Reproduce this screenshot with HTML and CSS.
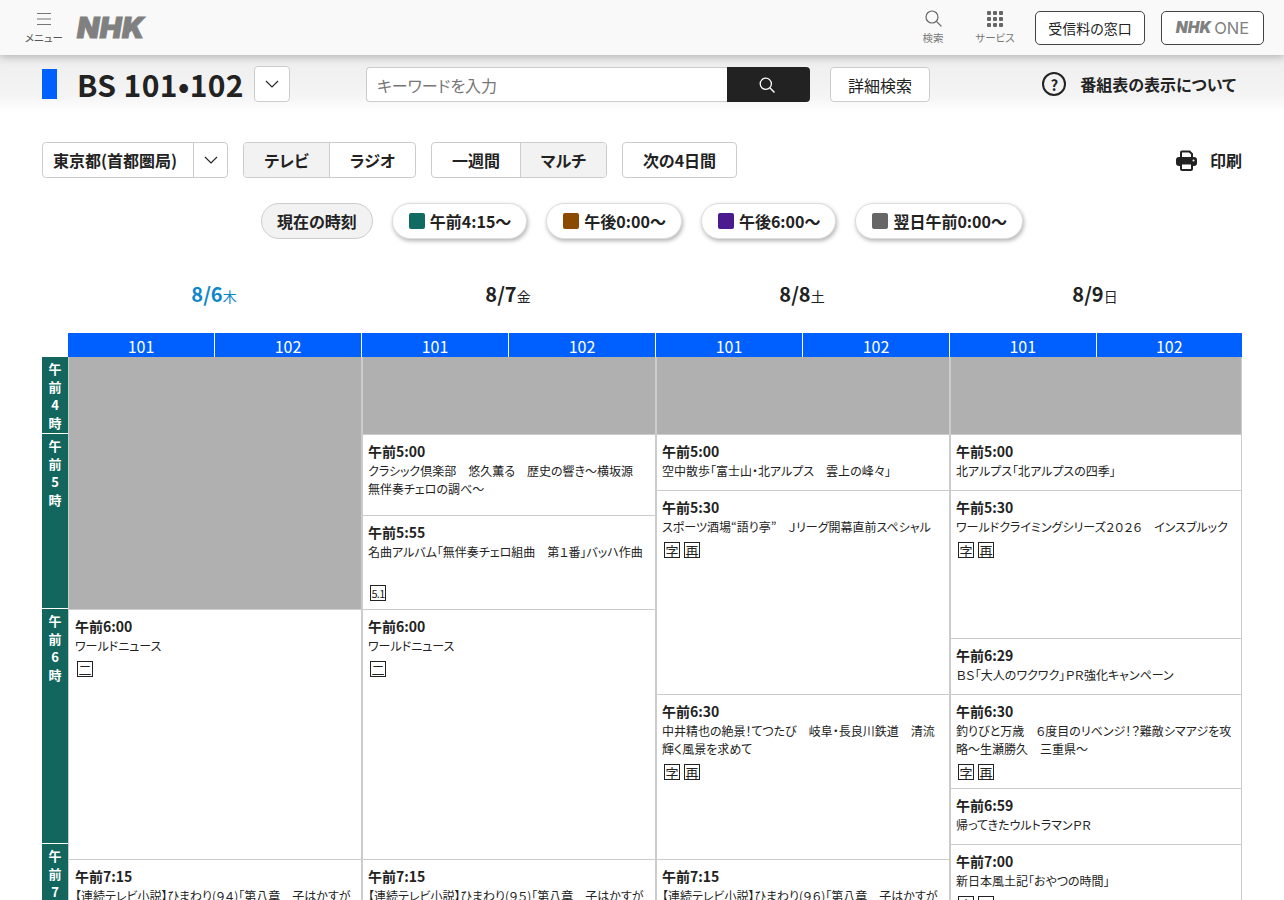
FILE: index.html
```html
<!DOCTYPE html>
<html lang="ja">
<head>
  <meta charset="utf-8">
  <title>番組表 BS 101・102</title>
  <link rel="stylesheet" href="styles.css">
</head>
<body>
  <header class="site-header">
    <div class="menu-btn">
      <svg width="14" height="14" viewBox="0 0 14 14"><path d="M0 1.5h14M0 7h14M0 12.5h14" stroke="#777" stroke-width="1.2" fill="none"/></svg>
      <span>メニュー</span>
    </div>
    <div class="nhk-logo">NHK</div>
    <div class="header-right">
      <div class="head-icon">
        <svg width="17" height="17" viewBox="0 0 17 17"><circle cx="7" cy="7" r="6" stroke="#666" stroke-width="1.2" fill="none"/><path d="M11.4 11.4l5 5" stroke="#666" stroke-width="1.3"/></svg>
        <span>検索</span>
      </div>
      <div class="head-icon services">
        <svg width="16" height="16" viewBox="0 0 16 16" fill="#666">
          <rect x="0" y="0" width="4" height="4" rx="1"/><rect x="6" y="0" width="4" height="4" rx="1"/><rect x="12" y="0" width="4" height="4" rx="1"/>
          <rect x="0" y="6" width="4" height="4" rx="1"/><rect x="6" y="6" width="4" height="4" rx="1"/><rect x="12" y="6" width="4" height="4" rx="1"/>
          <rect x="0" y="12" width="4" height="4" rx="1"/><rect x="6" y="12" width="4" height="4" rx="1"/><rect x="12" y="12" width="4" height="4" rx="1"/>
        </svg>
        <span>サービス</span>
      </div>
      <a class="head-btn fee">受信料の窓口</a>
      <a class="head-btn one"><b>NHK</b>ONE</a>
    </div>
  </header>

  <div class="sub-bar">
    <div class="channel-mark"></div>
    <h1 class="channel-name">BS 101•102</h1>
    <div class="chevron-btn">
      <svg width="14" height="8" viewBox="0 0 14 8"><path d="M1 1l6 6 6-6" stroke="#222" stroke-width="1.1" fill="none"/></svg>
    </div>
    <div class="search-box">
      <div class="search-input">キーワードを入力</div>
      <div class="search-submit">
        <svg width="16" height="16" viewBox="0 0 16 16"><circle cx="6.8" cy="6.8" r="5.6" stroke="#fff" stroke-width="1.3" fill="none"/><path d="M11 11l4.5 4.5" stroke="#fff" stroke-width="1.4"/></svg>
      </div>
    </div>
    <div class="detail-btn">詳細検索</div>
    <div class="about-link">
      <span class="about-icon">?</span>
      <span>番組表の表示について</span>
    </div>
  </div>

  <main class="content">
    <div class="controls">
      <div class="btn-group area">
        <div class="seg area-name">東京都(首都圏局)</div>
        <div class="seg area-arrow">
          <svg width="14" height="8" viewBox="0 0 14 8"><path d="M1 1l6 6 6-6" stroke="#222" stroke-width="1.1" fill="none"/></svg>
        </div>
      </div>
      <div class="btn-group media">
        <div class="seg tv active">テレビ</div>
        <div class="seg radio">ラジオ</div>
      </div>
      <div class="btn-group span">
        <div class="seg week">一週間</div>
        <div class="seg multi active">マルチ</div>
      </div>
      <div class="btn-group next">
        <div class="seg">次の4日間</div>
      </div>
      <div class="print-link">
        <svg width="21" height="21" viewBox="0 0 21 21">
          <path d="M5 8V2.5a1 1 0 0 1 1-1h7.5L16 4v4" stroke="#222" stroke-width="2" fill="none"/>
          <rect x="0" y="7" width="21" height="9" rx="3" fill="#222"/>
          <rect x="5" y="13.5" width="11" height="6.5" rx="1" fill="#fff" stroke="#222" stroke-width="2"/>
          <circle cx="17.5" cy="10.5" r="1" fill="#fff"/>
        </svg>
        <span>印刷</span>
      </div>
    </div>

    <div class="jump-row">
      <div class="pill now">現在の時刻</div>
      <div class="pill"><i class="swatch morning"></i>午前4:15〜</div>
      <div class="pill"><i class="swatch noon"></i>午後0:00〜</div>
      <div class="pill"><i class="swatch evening"></i>午後6:00〜</div>
      <div class="pill"><i class="swatch night"></i>翌日午前0:00〜</div>
    </div>

    <div class="date-row">
      <div class="date today"><b>8/6</b>木</div>
      <div class="date"><b>8/7</b>金</div>
      <div class="date"><b>8/8</b>土</div>
      <div class="date"><b>8/9</b>日</div>
    </div>

    <div class="schedule">
      <div class="hours">
        <div class="hour" style="height:77px">午<br>前<br>4<br>時</div>
        <div class="hour" style="height:175px">午<br>前<br>5<br>時</div>
        <div class="hour" style="height:235px">午<br>前<br>6<br>時</div>
        <div class="hour" style="height:100px">午<br>前<br>7<br>時</div>
      </div>

      <div class="day">
        <div class="ch-head"><span>101</span><span>102</span></div>
        <div class="blank" style="height:252px"></div>
        <div class="prog" style="height:250px">
          <div class="time">午前6:00</div>
          <div class="desc">ワールドニュース</div>
          <div class="marks"><span class="mark">二</span></div>
        </div>
        <div class="prog" style="height:100px">
          <div class="time">午前7:15</div>
          <div class="desc">【連続テレビ小説】ひまわり(９４)「第八章　子はかすが</div>
        </div>
      </div>

      <div class="day">
        <div class="ch-head"><span>101</span><span>102</span></div>
        <div class="blank" style="height:77px"></div>
        <div class="prog" style="height:81px">
          <div class="time">午前5:00</div>
          <div class="desc">クラシック倶楽部　悠久薫る　歴史の響き〜横坂源　無伴奏チェロの調べ〜</div>
        </div>
        <div class="prog" style="height:94px">
          <div class="time">午前5:55</div>
          <div class="desc two-lines">名曲アルバム「無伴奏チェロ組曲　第１番」バッハ作曲</div>
          <div class="marks"><span class="mark small">5.1</span></div>
        </div>
        <div class="prog" style="height:250px">
          <div class="time">午前6:00</div>
          <div class="desc">ワールドニュース</div>
          <div class="marks"><span class="mark">二</span></div>
        </div>
        <div class="prog" style="height:100px">
          <div class="time">午前7:15</div>
          <div class="desc">【連続テレビ小説】ひまわり(９５)「第八章　子はかすが</div>
        </div>
      </div>

      <div class="day">
        <div class="ch-head"><span>101</span><span>102</span></div>
        <div class="blank" style="height:77px"></div>
        <div class="prog" style="height:56px">
          <div class="time">午前5:00</div>
          <div class="desc">空中散歩「富士山・北アルプス　雲上の峰々」</div>
        </div>
        <div class="prog" style="height:204px">
          <div class="time">午前5:30</div>
          <div class="desc">スポーツ酒場“語り亭”　Ｊリーグ開幕直前スペシャル</div>
          <div class="marks"><span class="mark">字</span><span class="mark">再</span></div>
        </div>
        <div class="prog" style="height:165px">
          <div class="time">午前6:30</div>
          <div class="desc">中井精也の絶景！てつたび　岐阜・長良川鉄道　清流輝く風景を求めて</div>
          <div class="marks"><span class="mark">字</span><span class="mark">再</span></div>
        </div>
        <div class="prog" style="height:100px">
          <div class="time">午前7:15</div>
          <div class="desc">【連続テレビ小説】ひまわり(９６)「第八章　子はかすが</div>
        </div>
      </div>

      <div class="day">
        <div class="ch-head"><span>101</span><span>102</span></div>
        <div class="blank" style="height:77px"></div>
        <div class="prog" style="height:56px">
          <div class="time">午前5:00</div>
          <div class="desc">北アルプス「北アルプスの四季」</div>
        </div>
        <div class="prog" style="height:148px">
          <div class="time">午前5:30</div>
          <div class="desc">ワールドクライミングシリーズ２０２６　インスブルック</div>
          <div class="marks"><span class="mark">字</span><span class="mark">再</span></div>
        </div>
        <div class="prog" style="height:56px">
          <div class="time">午前6:29</div>
          <div class="desc">ＢＳ「大人のワクワク」ＰＲ強化キャンペーン</div>
        </div>
        <div class="prog" style="height:94px">
          <div class="time">午前6:30</div>
          <div class="desc">釣りびと万歳　６度目のリベンジ！？難敵シマアジを攻略〜生瀬勝久　三重県〜</div>
          <div class="marks"><span class="mark">字</span><span class="mark">再</span></div>
        </div>
        <div class="prog" style="height:56px">
          <div class="time">午前6:59</div>
          <div class="desc">帰ってきたウルトラマンＰＲ</div>
        </div>
        <div class="prog" style="height:100px">
          <div class="time">午前7:00</div>
          <div class="desc">新日本風土記「おやつの時間」</div>
          <div class="marks"><span class="mark">字</span><span class="mark">再</span></div>
        </div>
      </div>
    </div>
  </main>
</body>
</html>
```

FILE: styles.css
```css
html {
  overflow: hidden;
}

body {
  margin: 0;
  height: 900px;
  overflow: hidden;
  background-color: #ffffff;
  color: #222222;
  font-family: "Noto Sans CJK JP", "Noto Sans", sans-serif;
  font-feature-settings: "palt";
}

.site-header {
  position: relative;
  z-index: 2;
  display: flex;
  align-items: center;
  height: 55px;
  padding: 0 20px 0 24px;
  box-sizing: border-box;
  background-color: #f9f9f9;
  box-shadow: 0 2px 8px rgba(0, 0, 0, 0.25);
}

.menu-btn {
  display: flex;
  flex-direction: column;
  align-items: center;
  width: 40px;
  padding-top: 2px;
  font-size: 10.5px;
  line-height: 14px;
  color: #555555;
}

.menu-btn span {
  margin-top: 5px;
}

.nhk-logo {
  margin-left: 13px;
  font-family: Inter, sans-serif;
  font-size: 29px;
  font-weight: 900;
  font-style: italic;
  letter-spacing: 0.5px;
  color: #808080;
  -webkit-text-stroke: 1px #808080;
}

.header-right {
  display: flex;
  align-items: center;
  margin-left: auto;
}

.head-icon {
  display: flex;
  flex-direction: column;
  align-items: center;
  width: 40px;
  margin-right: 22px;
  font-size: 10.5px;
  line-height: 14px;
  color: #777777;
}

.head-icon span {
  margin-top: 4px;
}

.head-icon.services {
  margin-right: 20px;
}

.head-btn {
  display: flex;
  align-items: center;
  justify-content: center;
  height: 34px;
  box-sizing: border-box;
  border: 1px solid #444444;
  border-radius: 5px;
  background-color: #ffffff;
  font-size: 14px;
}

.head-btn.fee {
  width: 110px;
  margin-right: 16px;
}

.head-btn.one {
  width: 103px;
  color: #808080;
  font-family: Inter, sans-serif;
  font-size: 16.5px;
}

.head-btn.one b {
  margin-right: 3px;
  font-size: 15.5px;
  font-weight: 900;
  font-style: italic;
}

.sub-bar {
  display: flex;
  align-items: center;
  height: 57px;
  padding: 1px 48px 0 42px;
  box-sizing: border-box;
  background: linear-gradient(#eeeeee, #f4f4f4 70%, #ffffff);
}

.channel-mark {
  width: 15px;
  height: 30px;
  background-color: #0060ff;
}

.channel-name {
  margin: 0 0 0 20px;
  font-size: 30px;
  font-weight: 700;
  line-height: 36px;
  letter-spacing: 0.4px;
  white-space: nowrap;
}

.chevron-btn {
  display: flex;
  align-items: center;
  justify-content: center;
  width: 36px;
  height: 36px;
  margin-left: 10px;
  box-sizing: border-box;
  border: 1px solid #cccccc;
  border-radius: 4px;
  background-color: #ffffff;
}

.search-box {
  display: flex;
  height: 35px;
  margin: 1px 0 0 76px;
}

.search-input {
  display: flex;
  align-items: center;
  width: 361px;
  padding-left: 10px;
  box-sizing: border-box;
  border: 1px solid #cccccc;
  border-right: none;
  border-radius: 4px 0 0 4px;
  background-color: #ffffff;
  font-size: 16px;
  color: #767676;
}

.search-submit {
  display: flex;
  align-items: center;
  justify-content: center;
  width: 83px;
  padding-right: 2px;
  box-sizing: border-box;
  border-radius: 0 4px 4px 0;
  background-color: #222222;
}

.detail-btn {
  display: flex;
  align-items: center;
  justify-content: center;
  width: 100px;
  height: 35px;
  margin: 1px 0 0 20px;
  box-sizing: border-box;
  border: 1px solid #cccccc;
  border-radius: 4px;
  background-color: #ffffff;
  font-size: 16px;
}

.about-link {
  display: flex;
  align-items: center;
  margin-left: auto;
  font-size: 16px;
  font-weight: 700;
}

.about-icon {
  display: flex;
  align-items: center;
  justify-content: center;
  width: 24px;
  height: 24px;
  margin-right: 14px;
  box-sizing: border-box;
  border: 2px solid #222222;
  border-radius: 50%;
  font-size: 15px;
  line-height: 1;
}

.content {
  padding: 30px 42px 0;
}

.controls {
  display: flex;
  align-items: center;
  height: 36px;
}

.btn-group {
  display: flex;
  height: 36px;
  box-sizing: border-box;
  margin-right: 15px;
  border: 1px solid #cccccc;
  border-radius: 4px;
  overflow: hidden;
  font-size: 16px;
  font-weight: 700;
}

.seg {
  display: flex;
  align-items: center;
  justify-content: center;
  box-sizing: border-box;
}

.seg.active {
  background-color: #f2f2f2;
}

.seg + .seg {
  border-left: 1px solid #cccccc;
}

.area { width: 186px; }
.area-name { width: 150px; justify-content: flex-start; padding-left: 10px; }
.area-arrow { width: 34px; }
.media { width: 173px; }
.tv { width: 85px; }
.radio { width: 86px; }
.span { width: 176px; }
.week { width: 88px; }
.multi { width: 86px; }
.next { width: 115px; }
.next .seg { width: 100%; }

.print-link {
  display: flex;
  align-items: center;
  margin-left: auto;
  font-size: 16px;
  font-weight: 700;
}

.print-link span {
  margin-left: 13px;
}

.jump-row {
  display: flex;
  justify-content: center;
  gap: 19px;
  margin-top: 25px;
}

.pill {
  display: flex;
  align-items: center;
  height: 36px;
  padding: 0 15px 0 16px;
  box-sizing: border-box;
  border: 1px solid #dddddd;
  border-radius: 18px;
  background-color: #ffffff;
  box-shadow: 1px 2px 4px rgba(0, 0, 0, 0.3);
  font-size: 16px;
  font-weight: 700;
  white-space: nowrap;
}

.pill.now {
  padding: 0 15px;
  background-color: #f2f2f2;
  border-color: #cccccc;
  box-shadow: none;
}

.swatch {
  width: 16px;
  height: 16px;
  margin-right: 5px;
  border-radius: 2px;
}

.swatch.morning { background-color: #126b62; }
.swatch.noon { background-color: #8a4b00; }
.swatch.evening { background-color: #4b1a8e; }
.swatch.night { background-color: #666666; }

.date-row {
  display: grid;
  grid-template-columns: repeat(3, 294px) 292px;
  margin-top: 41px;
  margin-left: 25px;
  height: 28px;
}

.date {
  text-align: center;
  font-size: 14px;
  line-height: 28px;
}

.date b {
  font-size: 20px;
  font-weight: 700;
}

.date.today {
  color: #0d86cc;
}

.schedule {
  display: flex;
  margin-top: 25px;
}

.hours {
  flex: none;
  width: 26px;
  padding-top: 24px;
}

.hour {
  box-sizing: border-box;
  border-bottom: 1px solid #ffffff;
  padding-top: 3px;
  background-color: #12665e;
  color: #ffffff;
  font-size: 13px;
  font-weight: 700;
  line-height: 18px;
  text-align: center;
}

.day {
  flex: 0 0 294px;
  min-width: 0;
}

.day:last-child {
  flex-basis: 292px;
}

.ch-head {
  display: flex;
  height: 24px;
  margin-right: 1px;
  background-color: #0060ff;
  color: #ffffff;
  font-size: 16px;
  line-height: 26px;
  text-align: center;
}

.day:last-child .ch-head {
  margin-right: 0;
}

.ch-head span {
  flex: 1;
}

.ch-head span + span {
  border-left: 1px solid #ffffff;
}

.blank {
  box-sizing: border-box;
  border-left: 1px solid #cccccc;
  border-right: 1px solid #cccccc;
  background-color: #b0b0b0;
}

.prog {
  box-sizing: border-box;
  padding: 6px 6px 0;
  border-left: 1px solid #cccccc;
  border-right: 1px solid #cccccc;
  border-top: 1px solid #cccccc;
  overflow: hidden;
}

.day + .day .prog {
  padding-left: 5px;
}

.time {
  margin-bottom: 1px;
  font-size: 14px;
  font-weight: 700;
  line-height: 20px;
}

.desc {
  font-size: 12px;
  line-height: 18px;
}

.desc.two-lines {
  min-height: 36px;
}

.marks {
  display: flex;
  gap: 4px;
  margin: 6px 0 0 2px;
}

.mark {
  display: flex;
  align-items: center;
  justify-content: center;
  width: 16px;
  height: 16px;
  box-sizing: border-box;
  border: 1px solid #222222;
  font-size: 13px;
  line-height: 1;
}

.mark.small {
  font-size: 11px;
  letter-spacing: -0.8px;
}
```
